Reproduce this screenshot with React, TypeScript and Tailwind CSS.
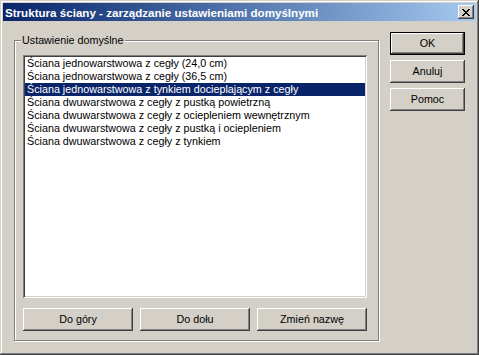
const items = [
  'Ściana jednowarstwowa z cegły (24,0 cm)',
  'Ściana jednowarstwowa z cegły (36,5 cm)',
  'Ściana jednowarstwowa z tynkiem docieplającym z cegły',
  'Ściana dwuwarstwowa z cegły z pustką powietrzną',
  'Ściana dwuwarstwowa z cegły z ociepleniem wewnętrznym',
  'Ściana dwuwarstwowa z cegły z pustką i ociepleniem',
  'Ściana dwuwarstwowa z cegły z tynkiem',
];

const raised =
  'shadow-[inset_-1px_-1px_#404040,inset_1px_1px_#ffffff,inset_-2px_-2px_#808080,inset_2px_2px_#d4d0c8]';

function Button({ label, primary, className }: { label: string; primary?: boolean; className?: string }) {
  return (
    <div className={`${primary ? 'border border-black' : ''} ${className ?? ''}`}>
      <div className={`h-full w-full flex items-center justify-center bg-[#d4d0c8] text-black ${raised}`}>
        {label}
      </div>
    </div>
  );
}

export default function App() {
  return (
    <div
      className={`w-[479px] h-[355px] bg-[#d4d0c8] p-[3px] flex flex-col text-[10.75px] leading-[13px] shadow-[inset_-1px_-1px_#404040,inset_1px_1px_#d4d0c8,inset_-2px_-2px_#808080,inset_2px_2px_#ffffff]`}
      style={{ fontFamily: '"Liberation Sans", Arial, sans-serif' }}
    >
      {/* title bar */}
      <div className="h-[18px] flex items-center justify-between pl-[2px] pr-[2px] bg-gradient-to-r from-[#0a246a] to-[#a6caf0]">
        <span className="text-white font-bold text-[11.6px]">
          Struktura ściany - zarządzanie ustawieniami domyślnymi
        </span>
        <div className={`w-[16px] h-[14px] bg-[#d4d0c8] flex items-center justify-center ${raised}`}>
          <svg width="8" height="7" viewBox="0 0 8 7" shapeRendering="crispEdges">
            <path
              fill="#000"
              d="M0 0h2v1h-2zM6 0h2v1h-2zM1 1h2v1h-2zM5 1h2v1h-2zM2 2h4v1h-4zM3 3h2v1h-2zM2 4h4v1h-4zM1 5h2v1h-2zM5 5h2v1h-2zM0 6h2v1h-2zM6 6h2v1h-2z"
            />
          </svg>
        </div>
      </div>

      {/* client */}
      <div className="flex pl-[11px] pt-[19px]">
        <div className="relative w-[365px] h-[301px] border border-[#808080] shadow-[inset_1px_1px_#ffffff,1px_1px_#ffffff] pl-[8px] pt-[14px] flex flex-col">
          <span className="absolute left-[6px] -top-[7px] px-[1px] bg-[#d4d0c8] text-black">Ustawienie domyślne</span>
          <div className="w-[344px] h-[243px] bg-white p-[2px] shadow-[inset_1px_1px_#808080,inset_-1px_-1px_#ffffff,inset_2px_2px_#404040,inset_-2px_-2px_#d4d0c8]">
            {items.map((it, i) => (
              <div
                key={it}
                className={`h-[13px] pl-[2px] whitespace-nowrap ${i === 2 ? 'bg-[#0a246a] text-white' : 'text-black'}`}
              >
                {it}
              </div>
            ))}
          </div>
          <div className="flex gap-[7px] mt-[10px]">
            <Button label="Do góry" className="w-[110px] h-[23px]" />
            <Button label="Do dołu" className="w-[110px] h-[23px]" />
            <Button label="Zmień nazwę" className="w-[110px] h-[23px]" />
          </div>
        </div>

        <div className="ml-[11px] mt-[-8px] flex flex-col gap-[5px]">
          <Button label="OK" primary className="w-[75px] h-[23px]" />
          <Button label="Anuluj" className="w-[75px] h-[23px]" />
          <Button label="Pomoc" className="w-[75px] h-[23px]" />
        </div>
      </div>
    </div>
  );
}
